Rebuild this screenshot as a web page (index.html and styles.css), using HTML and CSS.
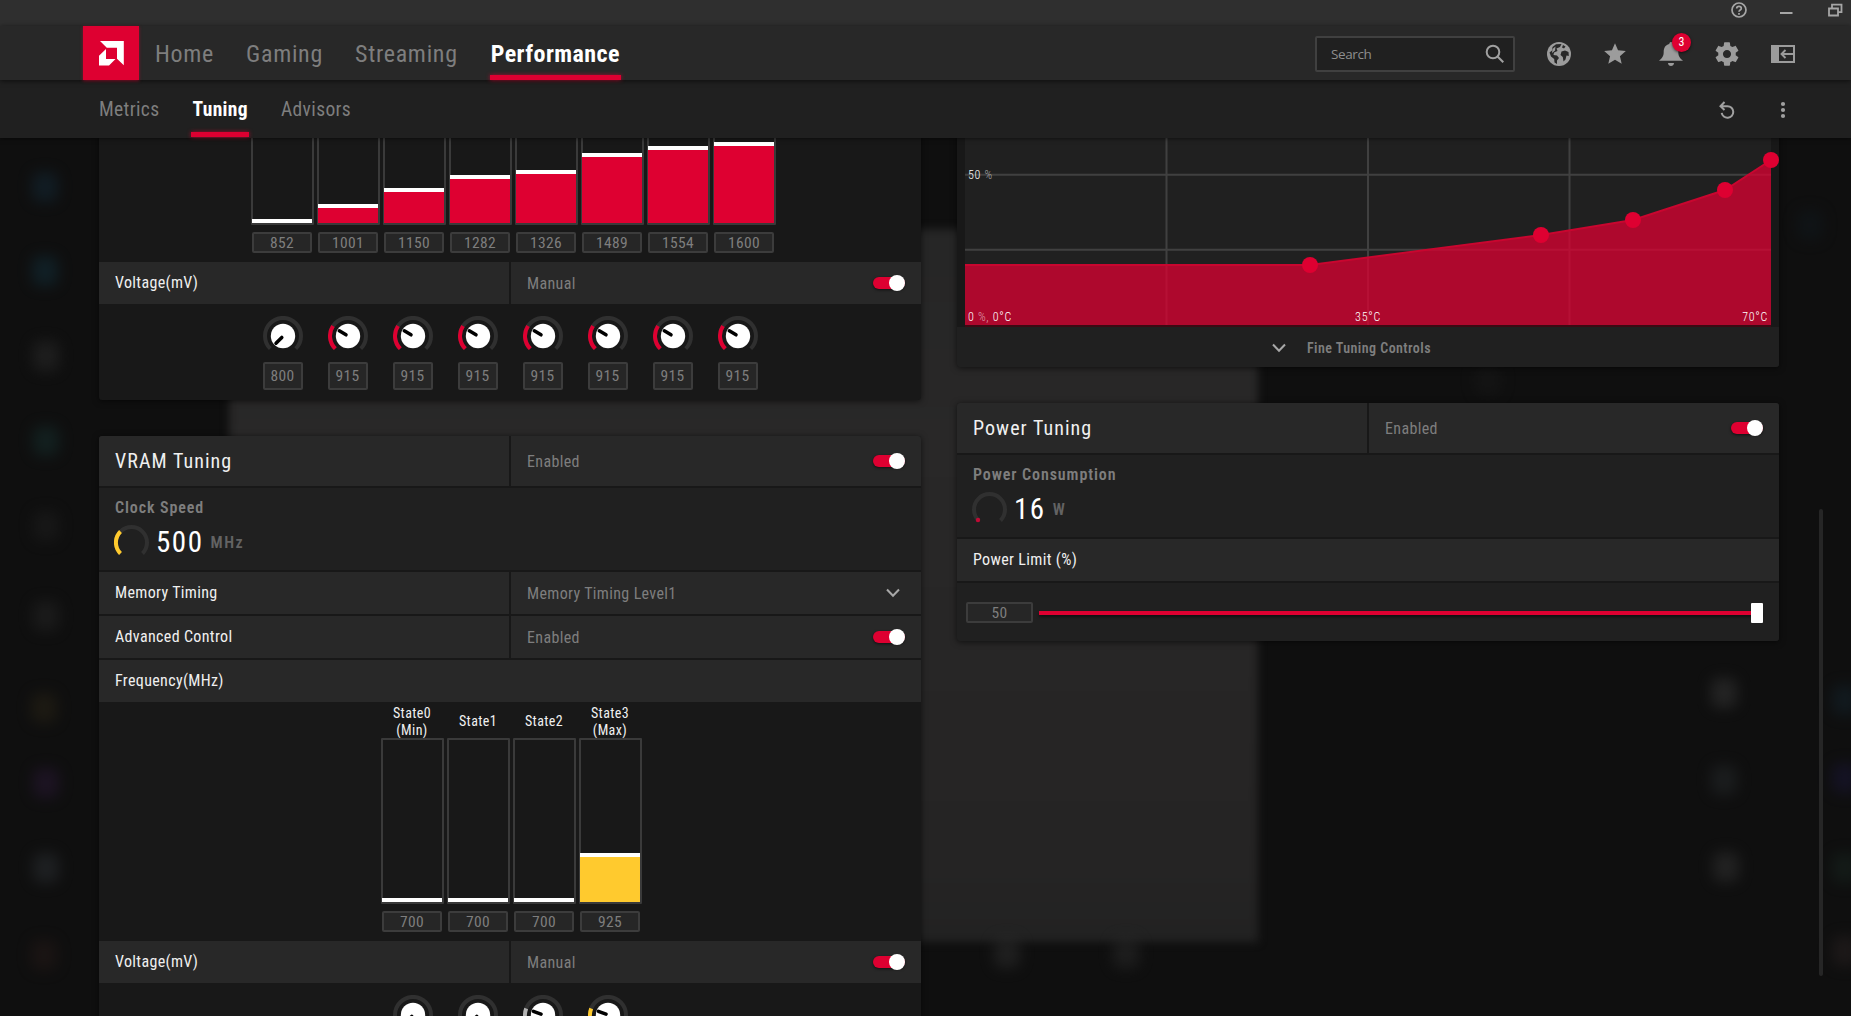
FILE: index.html
```html
<!DOCTYPE html>
<html lang="en">
<head>
  <meta charset="UTF-8">
  <meta name="viewport" content="width=device-width, initial-scale=1.0">
  <link rel="stylesheet" href="styles.css">
  <title>Performance - Tuning</title>
</head>
<body>
  <svg class="sprite">
    <symbol id="knob-min" viewBox="0 0 40 40">
      <path class="ring" d="M7.3 32.7A18 18 0 1 1 32.7 32.7"/>
      <circle cx="20" cy="20" r="12.2" fill="#fff"/>
      <path class="pointer" d="M18.8 21.4L13 27.2"/>
    </symbol>
    <symbol id="knob" viewBox="0 0 40 40">
      <path class="ring" d="M7.3 32.7A18 18 0 1 1 32.7 32.7"/>
      <path class="ring-value" d="M7.3 32.7A18 18 0 0 1 5 10"/>
      <circle cx="20" cy="20" r="12.2" fill="#fff"/>
      <path class="pointer" d="M18 18.8L11.3 14.8"/>
    </symbol>
    <symbol id="knob-vram" viewBox="0 0 40 40">
      <path class="ring" d="M7.3 32.7A18 18 0 1 1 32.7 32.7"/>
      <path class="ring-value" d="M7.3 32.7A18 18 0 0 1 3.2 13.5"/>
      <circle cx="20" cy="20" r="12.2" fill="#fff"/>
      <path class="pointer" d="M18 19.2L10.4 16.4"/>
    </symbol>
    <symbol id="chevron" viewBox="0 0 14 10">
      <path d="M1 1.5L7 7.8L13 1.5" fill="none" stroke="#a8a8a8" stroke-width="2"/>
    </symbol>
  </svg>

  <div class="desktop">
    <div class="window"></div>
    <i class="spot" style="left:45px;top:187px;background:#142a38"></i>
    <i class="spot" style="left:45px;top:271px;background:#12303c"></i>
    <i class="spot" style="left:46px;top:356px;background:#2c2c2c"></i>
    <i class="spot" style="left:46px;top:441px;background:#16302f"></i>
    <i class="spot" style="left:46px;top:526px;background:#1f1f1f"></i>
    <i class="spot" style="left:46px;top:616px;background:#262626"></i>
    <i class="spot" style="left:44px;top:708px;background:#2a2416"></i>
    <i class="spot" style="left:46px;top:783px;background:#2a1836"></i>
    <i class="spot" style="left:46px;top:868px;background:#2c3034"></i>
    <i class="spot" style="left:44px;top:955px;background:#261a18"></i>
    <i class="spot" style="left:1007px;top:953px;background:#303030"></i>
    <i class="spot" style="left:1126px;top:953px;background:#2c2c2c"></i>
    <i class="spot" style="left:1488px;top:380px;background:#191919"></i>
    <i class="spot" style="left:1724px;top:693px;background:#383838"></i>
    <i class="spot" style="left:1724px;top:780px;background:#262a2c"></i>
    <i class="spot" style="left:1726px;top:867px;background:#343434"></i>
    <i class="spot" style="left:1810px;top:225px;background:#11191e"></i>
    <i class="spot" style="left:1845px;top:700px;background:#14242e"></i>
    <i class="spot" style="left:1845px;top:778px;background:#1a1638"></i>
    <i class="spot" style="left:1845px;top:868px;background:#182620"></i>
    <i class="spot" style="left:1845px;top:951px;background:#2a2222"></i>
  </div>

  <div class="titlebar">
    <svg width="16" height="16" viewBox="0 0 16 16" fill="none" stroke="#a6a6a6" stroke-width="1.7">
      <circle cx="8" cy="8" r="7"/>
      <path d="M5.7 6.6C5.7 3.6 10.3 3.8 10.3 6.4C10.3 8 8 8 8 9.8M8 11v1.7"/>
    </svg>
    <svg width="13" height="16" viewBox="0 0 13 16"><path d="M0 10h12.5v2H0z" fill="#a6a6a6"/></svg>
    <svg width="15" height="16" viewBox="0 0 15 16" fill="none" stroke="#a6a6a6" stroke-width="1.8">
      <path d="M1 6.5h9v7H1zM4 6V2.7h9.5v7.5H10.5"/>
    </svg>
  </div>

  <header class="header">
    <div class="logo">
      <svg width="25" height="25" viewBox="0 0 25 25" fill="#fff">
        <path d="M1 0H24.8V24.3L18 17.8V6.8H7.8ZM0 14.8L7 8V18H16.5L10 24.5H0Z"/>
      </svg>
    </div>
    <nav class="menu">
      <a class="menu_item">Home</a>
      <a class="menu_item">Gaming</a>
      <a class="menu_item">Streaming</a>
      <a class="menu_item active">Performance</a>
    </nav>
    <div class="search">
      <span>Search</span>
      <svg width="20" height="20" viewBox="0 0 20 20" fill="none" stroke="#a0a0a0" stroke-width="2">
        <circle cx="8" cy="8" r="6.3"/>
        <path d="M12.5 12.5L18.3 18.3"/>
      </svg>
    </div>
    <div class="tools">
      <svg width="24" height="24" viewBox="0 0 24 24">
        <circle cx="12" cy="12" r="12" fill="#9c9c9c"/>
        <path d="M9 2.2L14.5 2L13 5L9.5 6.5L10.5 9L7 10.5L6.5 13L10 13.5L12 16L10 18.5V22L7.5 20.5L7.2 17L4 14.5L2.5 10.5L5 8.5L5.5 5Z" fill="#282828"/>
        <path d="M16 3L18.5 4.5L17 6.5L15 5.5ZM14.5 9.5L18 8.5L21.5 10L21.8 14L19.5 13.5L18.5 17.5L16.5 19.5L15.8 15L13.5 13Z" fill="#282828"/>
        <path d="M5.5 7L8.5 4.5L8 8.5L5 11Z" fill="#9c9c9c"/>
      </svg>
      <svg width="26" height="26" viewBox="0 0 24 24" fill="#9c9c9c">
        <path d="M12 17.27L18.18 21l-1.64-7.03L22 9.24l-7.19-.61L12 2 9.19 8.63 2 9.24l5.46 4.73L5.82 21z"/>
      </svg>
      <div class="bell">
        <svg width="24" height="24" viewBox="0 0 24 24" fill="#9c9c9c">
          <path d="M12 0C13.2 0 13.7 1 13.7 2C18 3 19.3 6.5 19.3 10C19.3 14.5 21 16 24 18.8H0C3 16 4.7 14.5 4.7 10C4.7 6.5 6 3 10.3 2C10.3 1 10.8 0 12 0ZM9 21H15C15 25 9 25 9 21Z"/>
        </svg>
        <span class="badge">3</span>
      </div>
      <svg width="28" height="28" viewBox="0 0 24 24" fill="#9c9c9c">
        <path d="M19.43 12.98c.04-.32.07-.64.07-.98s-.03-.66-.07-.98l2.11-1.65c.19-.15.24-.42.12-.64l-2-3.46c-.12-.22-.39-.3-.61-.22l-2.49 1c-.52-.4-1.08-.73-1.69-.98l-.38-2.65C14.46 2.18 14.25 2 14 2h-4c-.25 0-.46.18-.49.42l-.38 2.65c-.61.25-1.17.59-1.69.98l-2.49-1c-.23-.09-.49 0-.61.22l-2 3.46c-.13.22-.07.49.12.64l2.11 1.65c-.04.32-.07.65-.07.98s.03.66.07.98l-2.11 1.65c-.19.15-.24.42-.12.64l2 3.46c.12.22.39.3.61.22l2.49-1c.52.4 1.08.73 1.69.98l.38 2.65c.03.24.24.42.49.42h4c.25 0 .46-.18.49-.42l.38-2.65c.61-.25 1.17-.59 1.69-.98l2.49 1c.23.09.49 0 .61-.22l2-3.46c.12-.22.07-.49-.12-.64l-2.11-1.65zM12 15.5c-1.93 0-3.5-1.57-3.5-3.5s1.57-3.5 3.5-3.5 3.5 1.57 3.5 3.5-1.57 3.5-3.5 3.5z"/>
      </svg>
      <svg width="24" height="18" viewBox="0 0 24 18">
        <path d="M0 0H24V18H0ZM8 2V16H22V2Z" fill="#9c9c9c" fill-rule="evenodd"/>
        <path d="M22 9H11M14.5 5L10.5 9L14.5 13" fill="none" stroke="#9c9c9c" stroke-width="1.9"/>
      </svg>
    </div>
  </header>

  <div class="subheader">
    <nav class="tabs">
      <a class="tab">Metrics</a>
      <a class="tab active">Tuning</a>
      <a class="tab">Advisors</a>
    </nav>
    <div class="actions">
      <svg width="16" height="18" viewBox="0 0 16 18" fill="none" stroke="#a0a0a0" stroke-width="2">
        <path d="M1.5 5.2H8.5A5.8 5.8 0 1 1 2.7 11.8M5.5 1L1.5 5.2L5.5 9"/>
      </svg>
      <svg width="6" height="18" viewBox="0 0 6 18" fill="#a0a0a0">
        <circle cx="3" cy="3" r="2.1"/><circle cx="3" cy="9" r="2.1"/><circle cx="3" cy="15" r="2.1"/>
      </svg>
    </div>
  </div>

  <main class="content">
    <div class="column left">
      <section class="card">
        <div class="states states-gpu">
          <div class="state"><div class="bar"><div class="fill" style="height:4px"></div></div><span class="value">852</span></div>
          <div class="state"><div class="bar"><div class="fill" style="height:19px"></div></div><span class="value">1001</span></div>
          <div class="state"><div class="bar"><div class="fill" style="height:35px"></div></div><span class="value">1150</span></div>
          <div class="state"><div class="bar"><div class="fill" style="height:48px"></div></div><span class="value">1282</span></div>
          <div class="state"><div class="bar"><div class="fill" style="height:53px"></div></div><span class="value">1326</span></div>
          <div class="state"><div class="bar"><div class="fill" style="height:70px"></div></div><span class="value">1489</span></div>
          <div class="state"><div class="bar"><div class="fill" style="height:77px"></div></div><span class="value">1554</span></div>
          <div class="state"><div class="bar"><div class="fill" style="height:81px"></div></div><span class="value">1600</span></div>
        </div>
        <div class="row">
          <div class="cell name">Voltage(mV)</div>
          <div class="cell">Manual <span class="toggle"></span></div>
        </div>
        <div class="knobs">
          <div class="knob"><svg><use href="#knob-min"/></svg><span class="value">800</span></div>
          <div class="knob"><svg><use href="#knob"/></svg><span class="value">915</span></div>
          <div class="knob"><svg><use href="#knob"/></svg><span class="value">915</span></div>
          <div class="knob"><svg><use href="#knob"/></svg><span class="value">915</span></div>
          <div class="knob"><svg><use href="#knob"/></svg><span class="value">915</span></div>
          <div class="knob"><svg><use href="#knob"/></svg><span class="value">915</span></div>
          <div class="knob"><svg><use href="#knob"/></svg><span class="value">915</span></div>
          <div class="knob"><svg><use href="#knob"/></svg><span class="value">915</span></div>
        </div>
      </section>

      <section class="card">
        <div class="row row-title">
          <div class="cell title">VRAM Tuning</div>
          <div class="cell">Enabled <span class="toggle"></span></div>
        </div>
        <div class="stat">
          <div class="stat_label">Clock Speed</div>
          <div class="stat_value">
            <svg class="gauge vram" width="35" height="35" viewBox="0 0 35 35">
              <path class="ring" d="M6.5 28.5A15.5 15.5 0 1 1 28.5 28.5"/>
              <path class="ring-value" d="M6.5 28.5A15.5 15.5 0 0 1 6.5 6.5"/>
            </svg>
            <span class="number">500</span>
            <span class="unit">MHz</span>
          </div>
        </div>
        <div class="row">
          <div class="cell name">Memory Timing</div>
          <div class="cell">Memory Timing Level1 <svg class="chevron"><use href="#chevron"/></svg></div>
        </div>
        <div class="row">
          <div class="cell name">Advanced Control</div>
          <div class="cell">Enabled <span class="toggle"></span></div>
        </div>
        <div class="row">
          <div class="cell name">Frequency(MHz)</div>
        </div>
        <div class="states states-vram">
          <div class="state"><div class="state_label">State0<br>(Min)</div><div class="bar"><div class="fill" style="height:4px"></div></div><span class="value">700</span></div>
          <div class="state"><div class="state_label">State1</div><div class="bar"><div class="fill" style="height:4px"></div></div><span class="value">700</span></div>
          <div class="state"><div class="state_label">State2</div><div class="bar"><div class="fill" style="height:4px"></div></div><span class="value">700</span></div>
          <div class="state"><div class="state_label">State3<br>(Max)</div><div class="bar"><div class="fill" style="height:49px"></div></div><span class="value">925</span></div>
        </div>
        <div class="row">
          <div class="cell name">Voltage(mV)</div>
          <div class="cell">Manual <span class="toggle"></span></div>
        </div>
        <div class="knobs">
          <div class="knob"><svg><use href="#knob-min"/></svg></div>
          <div class="knob"><svg><use href="#knob-min"/></svg></div>
          <div class="knob idle"><svg><use href="#knob-vram"/></svg></div>
          <div class="knob vram"><svg><use href="#knob-vram"/></svg></div>
        </div>
      </section>
    </div>

    <div class="column right">
      <section class="card">
        <div class="graph">
          <svg width="822" height="302" viewBox="0 0 822 302">
            <rect x="8" y="0" width="806" height="300" fill="#202020"/>
            <path d="M209.5 0V300M411 0V300M612.5 0V300M8 149.7H814M8 224.7H814" stroke="#404040" stroke-width="2"/>
            <path d="M8 240H353L584 210L676 195L768 165L814 135V300H8Z" fill="#de0031" fill-opacity=".75"/>
            <path d="M8 240H353L584 210L676 195L768 165L814 135" fill="none" stroke="#c8062f" stroke-width="2"/>
            <path d="M8 301H814" stroke="#3c0a14" stroke-width="2"/>
            <g fill="#de0031">
              <circle cx="353" cy="240" r="8"/>
              <circle cx="584" cy="210" r="8"/>
              <circle cx="676" cy="195" r="8"/>
              <circle cx="768" cy="165" r="8"/>
              <circle cx="814" cy="135" r="8"/>
            </g>
            <g class="axis">
              <text x="11" y="153.5">50 <tspan class="percent">%</tspan></text>
              <text x="11" y="296">0 <tspan class="percent">%,</tspan> 0°C</text>
              <text x="411" y="296" text-anchor="middle">35°C</text>
              <text x="811" y="296" text-anchor="end">70°C</text>
            </g>
          </svg>
        </div>
        <div class="fine-tuning">
          <svg class="chevron"><use href="#chevron"/></svg>
          <span>Fine Tuning Controls</span>
        </div>
      </section>

      <section class="card">
        <div class="row row-title">
          <div class="cell title">Power Tuning</div>
          <div class="cell">Enabled <span class="toggle"></span></div>
        </div>
        <div class="stat">
          <div class="stat_label">Power Consumption</div>
          <div class="stat_value">
            <svg class="gauge" width="35" height="35" viewBox="0 0 35 35">
              <path class="ring" d="M6.5 28.5A15.5 15.5 0 1 1 28.5 28.5"/>
              <circle cx="6" cy="28" r="2.2" fill="#c00a35"/>
            </svg>
            <span class="number">16</span>
            <span class="unit">W</span>
          </div>
        </div>
        <div class="row">
          <div class="cell name">Power Limit (%)</div>
        </div>
        <div class="limit">
          <span class="value">50</span>
          <div class="slider"><div class="thumb"></div></div>
        </div>
      </section>
    </div>
  </main>
  <div class="scrollbar"></div>
</body>
</html>
```
FILE: styles.css
```css
* {
  box-sizing: border-box;
}

body {
  position: relative;
  display: flex;
  flex-direction: column;
  margin: 0;
  height: 1016px;
  overflow: hidden;
  background: #0f0f0f;
  color: #7e7e7e;
  font-family: "Roboto Condensed", Roboto, sans-serif;
  font-stretch: 75%;
  font-size: 16px;
}

svg {
  display: block;
  flex-shrink: 0;
}

.sprite {
  position: absolute;
  width: 0;
  height: 0;
}

/* blurred desktop behind the window */
.desktop {
  position: absolute;
  top: 0;
  left: 0;
  width: 1851px;
  height: 1016px;
  overflow: hidden;
}

.window {
  position: absolute;
  left: 229px;
  top: 229px;
  width: 1029px;
  height: 713px;
  background: linear-gradient(#262626, #292828 30%, #252424 90%, #222);
  filter: blur(4px);
}

.spot {
  position: absolute;
  width: 26px;
  height: 30px;
  margin: -15px 0 0 -13px;
  border-radius: 8px;
  opacity: 0.5;
  filter: blur(7px);
}

.titlebar {
  position: relative;
  display: flex;
  justify-content: flex-end;
  gap: 35px;
  height: 26px;
  padding: 2px 8px 0 0;
  background: #2f2f2f;
}

.titlebar svg:first-child {
  margin-right: -2px;
}

.header {
  position: relative;
  z-index: 3;
  display: flex;
  align-items: center;
  height: 54px;
  padding: 0 54px 0 83px;
  background: #282828;
  box-shadow: 0 1px 5px rgba(0, 0, 0, 0.6);
}

.logo {
  display: flex;
  align-items: center;
  justify-content: center;
  width: 56px;
  height: 54px;
  background: #de0031;
  box-shadow: 0 1px 3px rgba(222, 0, 49, 0.5);
}

.menu {
  display: flex;
  gap: 32px;
  height: 54px;
  margin-left: 16px;
}

.menu_item {
  padding-top: 1px;
  font-size: 24px;
  line-height: 54px;
  letter-spacing: 0.7px;
}

.active {
  position: relative;
  color: #fff;
  font-weight: 700;
}

.active::after {
  content: "";
  position: absolute;
  left: 0;
  right: 0;
  bottom: 0;
  height: 5px;
  background: #de0031;
  box-shadow: 0 0 4px rgba(222, 0, 49, 0.7);
}

.menu_item.active {
  width: 131px;
  padding-left: 1px;
  letter-spacing: 0.45px;
}

.search {
  display: flex;
  align-items: center;
  justify-content: space-between;
  width: 200px;
  height: 36px;
  margin: 1px 0 0 auto;
  padding: 0 8px 0 14px;
  border: 2px solid #404040;
  border-radius: 2px;
  background: #202020;
  color: #8e8e8e;
  font-family: "Open Sans", sans-serif;
  font-stretch: 100%;
  font-size: 13.5px;
  letter-spacing: -0.4px;
}

.tools {
  display: grid;
  grid-template-columns: repeat(5, 56px);
  place-items: center;
  width: 280px;
  margin: 2px -14px 0 16px;
}

.bell {
  position: relative;
}

.badge {
  position: absolute;
  left: 13px;
  top: -9px;
  width: 19px;
  height: 19px;
  border-radius: 50%;
  background: #de0031;
  box-shadow: 0 1px 3px rgba(0, 0, 0, 0.6);
  color: #fff;
  font-size: 12px;
  line-height: 19px;
  text-align: center;
}

.subheader {
  position: relative;
  z-index: 2;
  display: flex;
  align-items: center;
  justify-content: space-between;
  height: 58px;
  padding: 1px 65px 0 99px;
  background: #202020;
  box-shadow: 0 1px 4px rgba(0, 0, 0, 0.5);
}

.tabs {
  display: flex;
  align-self: flex-start;
  gap: 32px;
}

.tab {
  height: 56px;
  font-size: 19.5px;
  line-height: 58px;
  letter-spacing: 0.35px;
}

.tab.active {
  padding: 0 1px;
}

.actions {
  display: flex;
  gap: 45px;
}

.content {
  position: relative;
  display: flex;
  gap: 36px;
  height: 878px;
  padding-left: 99px;
  overflow: hidden;
}

.column {
  display: flex;
  flex-direction: column;
  flex-shrink: 0;
  gap: 36px;
  width: 822px;
}

/* scrolled position of both columns */
.left {
  margin-top: -79px;
}

.right {
  margin-top: -113px;
}

.card {
  flex-shrink: 0;
  border-radius: 3px;
  background: #181818;
  box-shadow: 0 1px 6px rgba(0, 0, 0, 0.6);
  overflow: hidden;
}

.row {
  display: flex;
  gap: 2px;
  height: 42px;
}

.row + .row {
  margin-top: 2px;
}

.row-title {
  height: 50px;
}

.cell {
  display: flex;
  flex: 1;
  align-items: center;
  justify-content: space-between;
  padding: 0 16px;
  background: #282828;
  letter-spacing: 0.35px;
}

.name {
  padding-bottom: 2px;
  color: #f0f0f0;
}

.title {
  color: #f0f0f0;
  font-size: 20px;
  letter-spacing: 1.05px;
}

.toggle {
  position: relative;
  width: 32px;
  height: 12px;
  border-radius: 6px;
  background: #de0031;
  box-shadow: 0 1px 3px rgba(0, 0, 0, 0.6);
}

.toggle::after {
  content: "";
  position: absolute;
  right: 0;
  top: -2px;
  width: 16px;
  height: 16px;
  border-radius: 50%;
  background: #fff;
}

.chevron {
  width: 14px;
  height: 10px;
}

.cell .chevron {
  margin-right: 5px;
}

.states {
  display: flex;
  justify-content: center;
  gap: 3px;
  padding-bottom: 9px;
}

.states-gpu {
  padding-left: 6px;
}

.states-vram {
  padding-left: 2px;
}

.state {
  display: flex;
  flex-direction: column;
  align-items: center;
  width: 63px;
}

.state_label {
  display: flex;
  align-items: center;
  height: 36px;
  padding-top: 3px;
  color: #f0f0f0;
  font-size: 14px;
  line-height: 17px;
  letter-spacing: 0.4px;
  text-align: center;
}

.bar {
  display: flex;
  align-items: flex-end;
  width: 63px;
  height: 166px;
  border: 2px solid #3a3a3a;
  border-radius: 1px;
}

.fill {
  flex: 0 0 60px;
  margin-left: -1px;
  border-top: 4px solid #fff;
  background: #de0031;
}

.states-vram .fill {
  background: #ffca2e;
}

.value {
  display: flex;
  align-items: center;
  justify-content: center;
  width: 60px;
  height: 21px;
  border: 2px solid #3c3c3c;
  border-radius: 2px;
  background: #262626;
  font-size: 15.5px;
  letter-spacing: 0.3px;
}

.state .value {
  margin-top: 7px;
}

.knobs {
  display: flex;
  justify-content: center;
  gap: 25px;
  height: 96px;
  padding-top: 12px;
}

.knob,
.gauge {
  color: #de0031;
}

.knob.idle {
  color: #b4b4b4;
}

.knob.vram,
.gauge.vram {
  color: #ffca2e;
}

.knob svg {
  width: 40px;
  height: 40px;
}

.knob .value {
  width: 40px;
  height: 28px;
  margin-top: 6px;
  color: #7e7e7e;
}

.ring {
  fill: none;
  stroke: #303030;
  stroke-width: 4;
}

.ring-value {
  fill: none;
  stroke: currentColor;
  stroke-width: 4;
}

.pointer {
  stroke: #000;
  stroke-width: 3.5;
  stroke-linecap: round;
}

.stat {
  height: 82px;
  margin: 2px 0;
  padding: 11px 15px 0;
  background: #202020;
}

.stat_label {
  padding-left: 1px;
  font-weight: 600;
  line-height: 18px;
  letter-spacing: 0.9px;
}

.stat_value {
  display: flex;
  align-items: center;
  height: 50px;
}

.gauge {
  margin-right: 7px;
}

.number {
  color: #fff;
  font-size: 29px;
  letter-spacing: 1.5px;
}

.unit {
  margin-left: 7px;
  color: #636363;
  font-weight: 600;
  letter-spacing: 1.6px;
}

.graph {
  height: 302px;
}

.axis {
  fill: #fff;
  font-size: 12px;
  font-weight: 300;
  letter-spacing: 0.7px;
}

.percent {
  fill-opacity: 0.6;
}

.fine-tuning {
  display: flex;
  align-items: center;
  justify-content: center;
  gap: 21px;
  height: 40px;
  padding: 1px 33px 0 0;
  background: #202020;
  font-size: 14px;
  font-weight: 600;
  letter-spacing: 0.45px;
}

.limit {
  display: flex;
  align-items: center;
  height: 58px;
  margin-top: 2px;
  padding: 1px 0 0 9px;
  background: #202020;
}

.limit .value {
  width: 67px;
}

.slider {
  display: flex;
  align-items: center;
  justify-content: flex-end;
  width: 724px;
  height: 4px;
  margin-left: 6px;
  background: #de0031;
  box-shadow: 0 2px 3px rgba(0, 0, 0, 0.5);
}

.thumb {
  width: 12px;
  height: 20px;
  border-radius: 1px;
  background: #fff;
}

.scrollbar {
  position: absolute;
  left: 1819px;
  top: 509px;
  width: 4px;
  height: 467px;
  border-radius: 2px;
  background: #262626;
}
```
